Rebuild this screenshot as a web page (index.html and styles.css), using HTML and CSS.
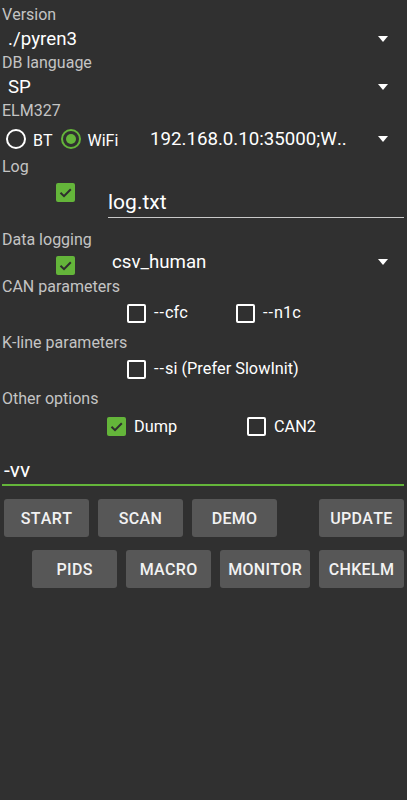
FILE: index.html
```html
<!DOCTYPE html>
<html>
<head>
<meta charset="utf-8">
<link rel="stylesheet" href="styles.css">
</head>
<body>
<div class="page">
  <div class="label">Version</div>
  <div class="spinner"><span class="value">./pyren3</span><span class="tri"></span></div>
  <div class="label">DB language</div>
  <div class="spinner"><span class="value">SP</span><span class="tri"></span></div>
  <div class="label">ELM327</div>
  <div class="radio-row">
    <div class="radios">
      <span class="radio"></span><span class="rtext">BT</span>
      <span class="radio on"></span><span class="rtext">WiFi</span>
    </div>
    <div class="spinner ip"><span class="value">192.168.0.10:35000;W..</span><span class="tri"></span></div>
  </div>
  <div class="label">Log</div>
  <div class="log-row">
    <div class="cb-cell"><span class="cb checked"><svg viewBox="0 0 19 19"><path d="M4.5 9.8 L8 13.2 L14.8 6.2" /></svg></span></div>
    <div class="edit"><span>log.txt</span></div>
  </div>
  <div class="label">Data logging</div>
  <div class="dl-row">
    <div class="cb-cell"><span class="cb checked"><svg viewBox="0 0 19 19"><path d="M4.5 9.8 L8 13.2 L14.8 6.2" /></svg></span></div>
    <div class="spinner dl"><span class="value">csv_human</span><span class="tri"></span></div>
  </div>
  <div class="label">CAN parameters</div>
  <div class="opt-row">
    <div class="opt w109"><span class="cb"></span><span class="otext"><span class="dash">--</span>cfc</span></div>
    <div class="opt"><span class="cb"></span><span class="otext"><span class="dash">--</span>n1c</span></div>
  </div>
  <div class="label">K-line parameters</div>
  <div class="opt-row">
    <div class="opt"><span class="cb"></span><span class="otext"><span class="dash">--</span>si (Prefer SlowInit)</span></div>
  </div>
  <div class="label">Other options</div>
  <div class="opt-row other">
    <div class="opt w140"><span class="cb checked"><svg viewBox="0 0 19 19"><path d="M4.5 9.8 L8 13.2 L14.8 6.2" /></svg></span><span class="otext">Dump</span></div>
    <div class="opt"><span class="cb"></span><span class="otext">CAN2</span></div>
  </div>
  <div class="args"><span>-vv</span></div>
  <div class="btn-row first">
    <div class="btn">START</div>
    <div class="btn">SCAN</div>
    <div class="btn">DEMO</div>
    <div class="btn push">UPDATE</div>
  </div>
  <div class="btn-row second">
    <div class="btn">PIDS</div>
    <div class="btn">MACRO</div>
    <div class="btn">MONITOR</div>
    <div class="btn">CHKELM</div>
  </div>
</div>
</body>
</html>
```
FILE: styles.css
```css
html, body {
  margin: 0;
  padding: 0;
  background: #303030;
}
body {
  width: 407px;
  height: 800px;
  font-family: Roboto, "Noto Sans", sans-serif;
  color: #ffffff;
  font-kerning: none;
}
.page {
  padding: 5px 3px 0 2px;
}
.label {
  font-size: 16px;
  line-height: 20px;
  height: 20px;
  color: #c4c4c4;
}
.spinner {
  display: flex;
  align-items: center;
  height: 28px;
  padding-left: 6px;
}
.spinner .value {
  flex: 1;
  font-size: 18.7px;
  line-height: 28px;
  white-space: nowrap;
}
.tri {
  width: 0;
  height: 0;
  border-left: 5.5px solid transparent;
  border-right: 5.5px solid transparent;
  border-top: 6px solid #ffffff;
  margin-right: 16px;
}
.radio-row {
  display: flex;
  align-items: center;
  height: 36px;
}
.radios {
  display: flex;
  align-items: center;
  width: 140px;
  padding-left: 4px;
  box-sizing: border-box;
}
.radio {
  width: 20px;
  height: 20px;
  box-sizing: border-box;
  border: 2px solid #ffffff;
  border-radius: 50%;
  display: flex;
  align-items: center;
  justify-content: center;
}
.radio.on {
  border-color: #64b53a;
  margin-left: 8px;
}
.radio.on::after {
  content: "";
  width: 10px;
  height: 10px;
  border-radius: 50%;
  background: #64b53a;
}
.rtext {
  font-size: 16px;
  margin-left: 7px;
  padding-top: 2px;
}
.spinner.ip {
  flex: 1;
  padding-left: 8px;
}
.log-row {
  display: flex;
  align-items: flex-start;
  height: 53px;
}
.cb-cell {
  width: 106px;
  padding-left: 54px;
  padding-top: 6px;
  box-sizing: border-box;
  flex: none;
}
.cb {
  display: block;
  width: 19px;
  height: 19px;
  box-sizing: border-box;
  border: 2px solid #ffffff;
  border-radius: 2px;
  flex: none;
}
.cb.checked {
  border: none;
  background: #64b53a;
}
.cb svg {
  display: block;
  width: 19px;
  height: 19px;
}
.cb svg path {
  fill: none;
  stroke: #2e2e2e;
  stroke-width: 2;
}
.edit {
  flex: 1;
  margin-top: 13px;
  font-size: 21px;
  line-height: 24px;
  padding-bottom: 3px;
  border-bottom: 1.5px solid #c8c8c8;
}
.dl-row {
  display: flex;
  align-items: flex-start;
  height: 27px;
}
.spinner.dl {
  flex: 1;
  height: 24px;
  padding-left: 4px;
}
.spinner.dl .value {
  line-height: 24px;
}
.opt-row {
  display: flex;
  align-items: flex-start;
  height: 36px;
  padding-left: 125px;
  padding-top: 7px;
  box-sizing: border-box;
}
.opt {
  display: flex;
  align-items: flex-start;
}
.opt.w109 { width: 109px; }
.opt.w140 { width: 140px; }
.otext {
  font-size: 16.3px;
  line-height: 20px;
  margin-left: 8px;
  margin-top: -1px;
}
.dash {
  letter-spacing: 1px;
}
.opt-row.other {
  padding-left: 105px;
  padding-top: 8px;
}
.opt-row.other .otext {
  margin-top: 0;
}
.args {
  margin-top: 14px;
  font-size: 21px;
  line-height: 22px;
  padding-left: 2px;
  padding-bottom: 3px;
  border-bottom: 2px solid #64b53a;
}
.btn-row {
  display: flex;
  gap: 9px;
}
.btn-row.first {
  margin-top: 13px;
  padding-left: 2px;
}
.btn-row.second {
  margin-top: 13px;
  justify-content: flex-end;
}
.btn {
  min-width: 85px;
  height: 38px;
  box-sizing: border-box;
  padding: 0 8px;
  background: #575757;
  border-radius: 3px;
  display: flex;
  align-items: center;
  justify-content: center;
  font-size: 16px;
  font-weight: 500;
  color: #f2f2f2;
  letter-spacing: 0.3px;
}
.btn.push {
  margin-left: auto;
}
```
